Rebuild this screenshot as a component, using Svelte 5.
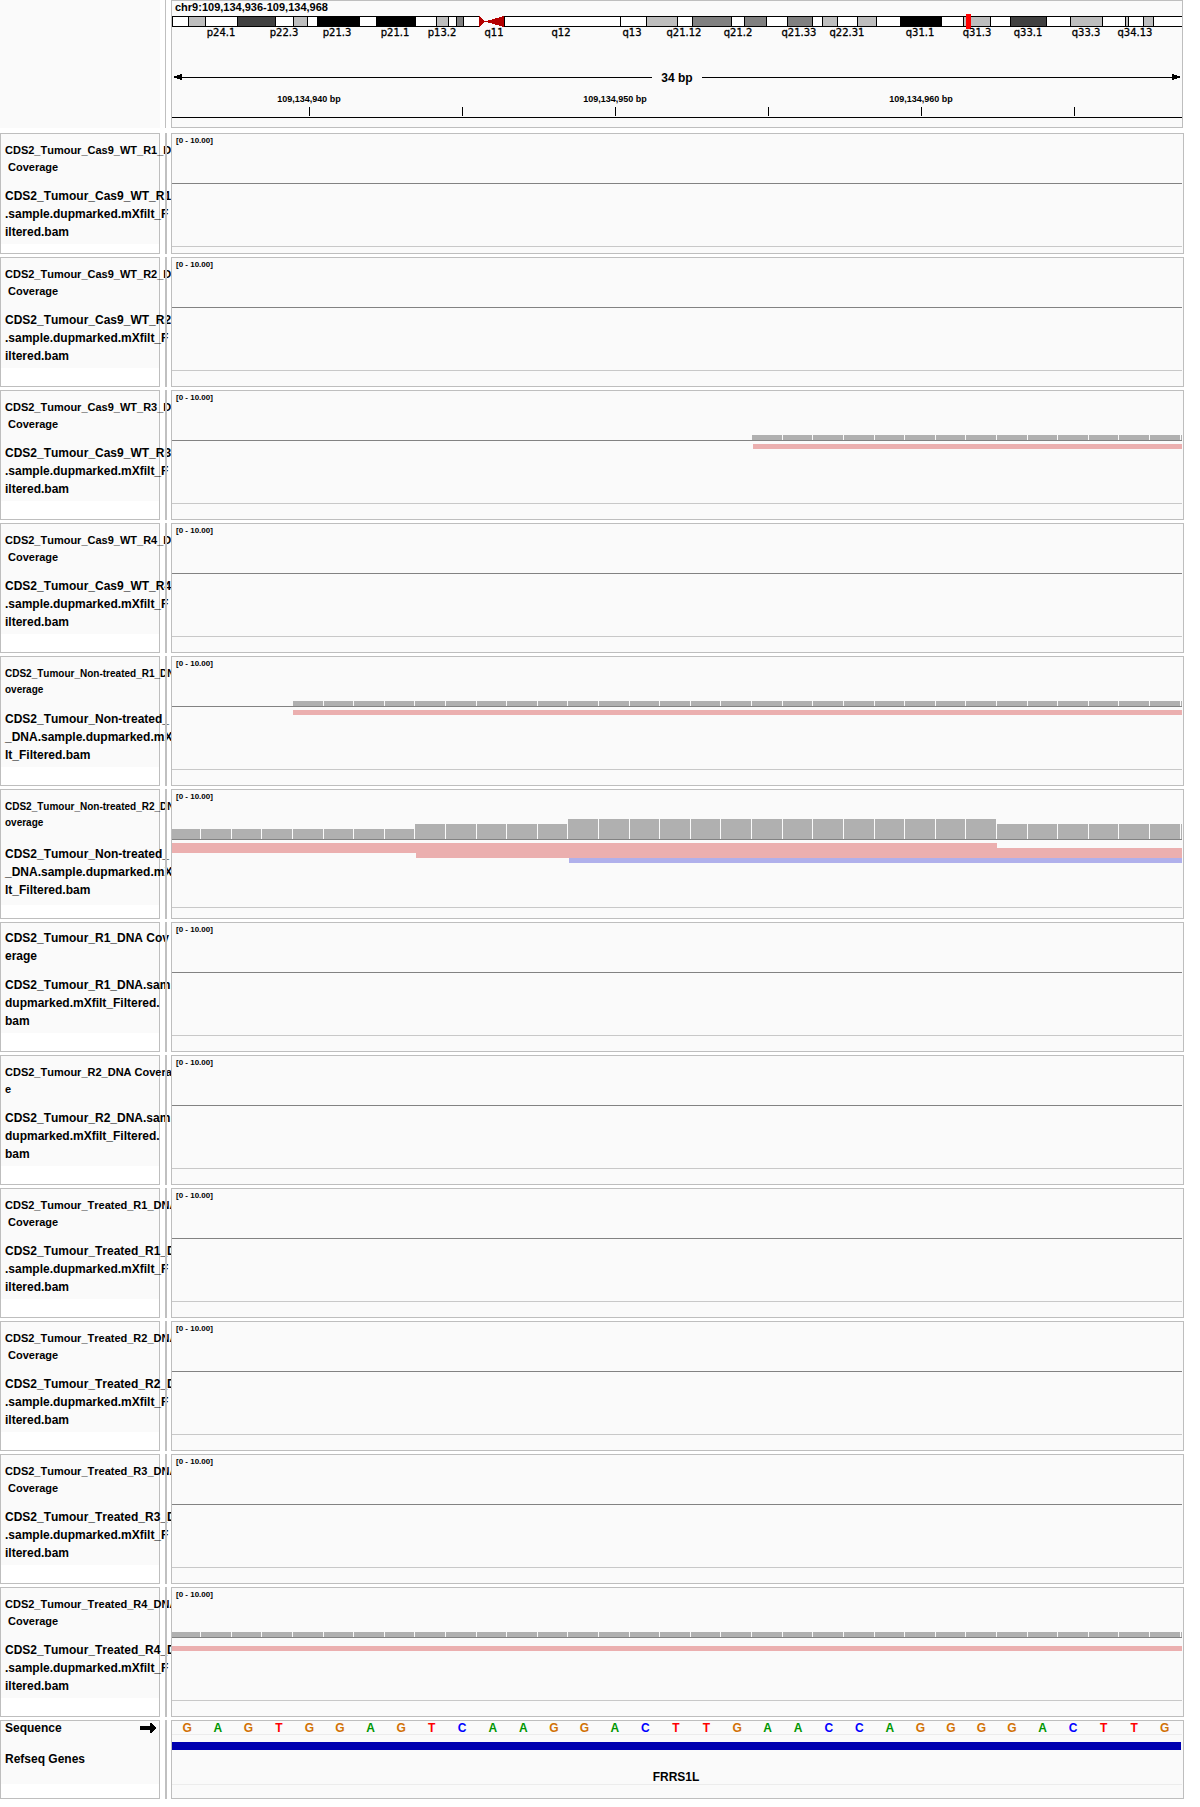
<script>
  // Plot geometry is kept in units of a 1010-wide canvas and drawn as percentages.
  const SPAN = 1010;
  const pct = (v) => `${(v / SPAN) * 100}%`;

  const shades = { w: '#ffffff', l: '#bebebe', m: '#808080', d: '#404040', k: '#000000' };

  const bandEdges = [
    [0, 'w'], [16, 'l'], [33, 'w'], [65, 'd'], [103, 'w'], [121, 'l'], [135, 'w'],
    [145, 'k'], [187, 'w'], [204, 'k'], [243, 'w'], [264, 'l'], [276, 'w'],
    [284, 'm'], [291, 'w'], [307, 'gap'], [332, 'w'], [448, 'w'], [474, 'l'],
    [505, 'w'], [520, 'm'], [559, 'w'], [572, 'm'], [594, 'w'], [615, 'm'],
    [640, 'w'], [650, 'l'], [665, 'w'], [685, 'l'], [704, 'w'], [728, 'k'],
    [769, 'w'], [791, 'l'], [818, 'w'], [838, 'd'], [874, 'w'], [898, 'l'],
    [930, 'w'], [953, 'l'], [956, 'w'], [971, 'l'], [981, 'w']
  ];
  const bands = bandEdges
    .map(([x, tone], i) => ({ x, tone, end: i + 1 < bandEdges.length ? bandEdges[i + 1][0] : SPAN }))
    .filter((b) => b.tone !== 'gap');

  const bandLabels = [
    ['p24.1', 49], ['p22.3', 112], ['p21.3', 165], ['p21.1', 223], ['p13.2', 270],
    ['q11', 322], ['q12', 389], ['q13', 460], ['q21.12', 512], ['q21.2', 566],
    ['q21.33', 627], ['q22.31', 675], ['q31.1', 748], ['q31.3', 805],
    ['q33.1', 856], ['q33.3', 914], ['q34.13', 963]
  ];

  const ticks = [
    { x: 137, label: '109,134,940 bp' }, { x: 290 },
    { x: 443, label: '109,134,950 bp' }, { x: 596 },
    { x: 749, label: '109,134,960 bp' }, { x: 902 }
  ];

  // Right edge of the base in column k; a one-unit gap follows it.
  const edge = (k) => (k > 32 ? SPAN : Math.floor(28.6 + 30.61 * k));
  const coverage = (from, to, height) =>
    Array.from({ length: to - from + 1 }, (_, i) => {
      const k = from + i;
      const x = k === 0 ? 0 : edge(k - 1) + 1;
      return { x, w: edge(k) - x, h: height };
    });

  const fwd = '#ebafaf';
  const rev = '#b0b0eb';

  const wt = (n) => ({
    size: 'mid',
    cov: [`CDS2_Tumour_Cas9_WT_${n}_D`, ' Coverage'],
    name: [`CDS2_Tumour_Cas9_WT_${n}`, '.sample.dupmarked.mXfilt_F', 'iltered.bam']
  });
  const non = (n) => ({
    size: 'small',
    cov: [`CDS2_Tumour_Non-treated_${n}_DN`, 'overage'],
    name: ['CDS2_Tumour_Non-treated_', '_DNA.sample.dupmarked.mX', 'lt_Filtered.bam']
  });
  const plain = (n, size, cov) => ({
    size,
    cov,
    name: [`CDS2_Tumour_${n}_DNA.sam`, 'dupmarked.mXfilt_Filtered.', 'bam']
  });
  const treated = (n) => ({
    size: 'mid',
    cov: [`CDS2_Tumour_Treated_${n}_DNA`, ' Coverage'],
    name: [`CDS2_Tumour_Treated_${n}_D`, '.sample.dupmarked.mXfilt_F', 'iltered.bam']
  });

  const tracks = [
    { ...wt('R1'), short: true },
    wt('R2'),
    { ...wt('R3'), bars: coverage(19, 33, 5), reads: [{ x: 581, end: SPAN, y: 53, h: 5, fill: fwd }] },
    wt('R4'),
    { ...non('R1'), bars: coverage(4, 33, 5), reads: [{ x: 121, end: SPAN, y: 53, h: 5, fill: fwd }] },
    {
      ...non('R2'),
      tall: true,
      bars: [...coverage(0, 7, 10), ...coverage(8, 12, 15), ...coverage(13, 26, 20), ...coverage(27, 33, 15)],
      reads: [
        { x: 0, end: 825, y: 53, h: 5, fill: fwd },
        { x: 0, end: SPAN, y: 58, h: 5, fill: fwd },
        { x: 244, end: SPAN, y: 63, h: 5, fill: fwd },
        { x: 397, end: SPAN, y: 68, h: 5, fill: rev }
      ]
    },
    plain('R1', 'large', ['CDS2_Tumour_R1_DNA Cov', 'erage']),
    plain('R2', 'mid', ['CDS2_Tumour_R2_DNA Covera', 'e']),
    treated('R1'),
    treated('R2'),
    treated('R3'),
    { ...treated('R4'), bars: coverage(0, 33, 5), reads: [{ x: 0, end: SPAN, y: 58, h: 5, fill: fwd }] }
  ];

  const bases = [...'GAGTGGAGTCAAGGACTTGAACCAGGGGACTTG'];
</script>

<main class="viewer">
  <header class="row ruler-row">
    <div class="corner"></div>
    <div class="gutter thin"></div>
    <section class="panel ruler" aria-label="Genome ruler">
      <h1>chr9:109,134,936-109,134,968</h1>
      <svg class="cyto" aria-label="Chromosome 9">
        {#each bands as b}
          <rect x={pct(b.x)} y="2" width={pct(b.end - b.x)} height="11" fill={shades[b.tone]} />
          <rect x={pct(b.x)} y="2" width="1" height="11" />
          <rect x={pct(b.x)} y="2" width={pct(b.end - b.x)} height="1" />
          <rect x={pct(b.x)} y="12" width={pct(b.end - b.x)} height="1" />
        {/each}
        <svg x={pct(307)} y="2" width={pct(25)} height="11" viewBox="0 0 25 11" preserveAspectRatio="none">
          <path d="M0 0L6 5.5L0 11ZM25 0L6 5.5L25 11Z" fill="#b40000" />
        </svg>
        <rect x={pct(794)} y="0" width="5" height="15" fill="#ff0000" />
        {#each bandLabels as [label, x]}
          <text x={pct(x)} y="22">{label}</text>
        {/each}
      </svg>
      <div class="span">
        <svg class="arrow" viewBox="0 0 10 6"><path d="M0 3L10 0V6Z" /></svg>
        <i></i>
        <span>34 bp</span>
        <i></i>
        <svg class="arrow" viewBox="0 0 10 6"><path d="M10 3L0 0V6Z" /></svg>
      </div>
      <svg class="ticks" aria-label="Positions">
        {#each ticks as t}
          {#if t.label}<text x={pct(t.x)} y="12">{t.label}</text>{/if}
          <rect x={pct(t.x)} y="17" width="1" height="9" />
        {/each}
        <rect x="0" y="27" width="100%" height="1" />
      </svg>
    </section>
  </header>

  {#each tracks as t}
    <section class="row track" class:short={t.short} class:tall={t.tall}>
      <div class="names">
        <div class="cov {t.size}">{#each t.cov as line}<p>{line}</p>{/each}</div>
        <div class="align">{#each t.name as line}<p>{line}</p>{/each}</div>
      </div>
      <div class="gutter"></div>
      <div class="panel data">
        <svg aria-label="Coverage and alignments">
          {#each t.bars ?? [] as b}
            <rect x={pct(b.x)} y={49 - b.h} width={pct(b.w)} height={b.h} fill="#b0b0b0" />
          {/each}
          <rect x="0" y="49" width="100%" height="1" fill="#828282" />
          {#each t.reads ?? [] as r}
            <rect x={pct(r.x)} y={r.y} width={pct(r.end - r.x)} height={r.h} fill={r.fill} />
          {/each}
          <rect x="0" y={t.tall ? 117 : 112} width="100%" height="1" fill="#c8c8c8" />
          <text x="4" y="9">[0 - 10.00]</text>
        </svg>
      </div>
    </section>
  {/each}

  <section class="row genes">
    <div class="names">
      <div class="seq-name">
        <span>Sequence</span>
        <svg viewBox="0 0 16 10"><path d="M0 3H10V0H11L16 5L11 10H10V7H0Z" /></svg>
      </div>
      <div class="gene-name">Refseq Genes</div>
    </div>
    <div class="gutter"></div>
    <div class="panel data">
      <div class="bases">
        {#each bases as b}<span class={b}>{b}</span>{/each}
      </div>
      <div class="gene">
        <div class="exon"></div>
        <span>FRRS1L</span>
      </div>
    </div>
  </section>
</main>

<style>
  :global(body) {
    margin: 0;
    background: #fff;
  }
  .viewer {
    display: flex;
    flex-direction: column;
    gap: 3px;
    padding-right: 16px;
    font: bold 12px/18px 'Liberation Sans', Arial, sans-serif;
    font-kerning: none;
    color: #000;
  }
  p, h1 {
    margin: 0;
    white-space: pre;
  }
  svg {
    display: block;
    shape-rendering: crispEdges;
  }
  .row {
    display: flex;
    box-sizing: border-box;
    overflow: hidden;
  }
  .gutter {
    flex: none;
    width: 2px;
    margin: 0 4px 0 5px;
    background: #c0c0c0;
  }
  .gutter.thin {
    width: 1px;
    margin-right: 5px;
  }
  .panel {
    flex: 1;
    min-width: 0;
    box-sizing: border-box;
    border: 1px solid #bebebe;
    background: #fafafa;
  }

  .ruler-row {
    height: 128px;
    margin-bottom: 2px;
  }
  .corner {
    flex: none;
    width: 160px;
    background: #fafafa;
  }
  .ruler {
    margin-right: 1px;
  }
  h1 {
    padding-left: 3px;
    font-size: 11px;
    line-height: 13px;
  }
  .cyto {
    width: 100%;
    height: 26px;
    overflow: hidden;
  }
  .cyto text {
    font: 10px 'DejaVu Sans', sans-serif;
    text-anchor: middle;
    stroke: #000;
    stroke-width: 0.3px;
  }
  .span {
    display: flex;
    align-items: center;
    height: 18px;
    margin-top: 28px;
  }
  .span i {
    flex: 1;
    height: 1px;
    background: #000;
  }
  .span span {
    padding: 2px 9px 0;
  }
  .arrow {
    flex: none;
    width: 10px;
    height: 6px;
  }
  .ticks {
    width: 100%;
    height: 30px;
    margin-top: 4px;
  }
  .ticks text {
    font-size: 9px;
    text-anchor: middle;
  }

  .track {
    height: 130px;
  }
  .track.short {
    height: 121px;
  }
  .names {
    flex: none;
    box-sizing: border-box;
    width: 160px;
    border: 1px solid #bebebe;
  }
  .cov, .align {
    display: flex;
    flex-direction: column;
    justify-content: center;
    box-sizing: border-box;
    padding-left: 4px;
    background: #fafafa;
  }
  .cov {
    height: 49px;
  }
  .align {
    height: 61px;
  }
  .tall .align {
    height: 66px;
  }
  .small {
    font-size: 10px;
    line-height: 16px;
  }
  .mid {
    font-size: 11px;
    line-height: 17px;
  }
  .large {
    padding-bottom: 2px;
  }
  .data {
    padding-right: 1px;
  }
  .data > svg {
    width: 100%;
    height: 119px;
  }
  .data text {
    font-size: 8px;
  }

  .genes {
    height: 79px;
  }
  .seq-name, .gene-name {
    box-sizing: border-box;
    padding-left: 4px;
    background: #fafafa;
  }
  .seq-name {
    display: flex;
    justify-content: space-between;
    align-items: center;
    height: 14px;
    padding-right: 3px;
  }
  .seq-name svg {
    width: 16px;
    height: 10px;
  }
  .gene-name {
    height: 49px;
    padding-top: 15px;
  }
  .bases {
    display: grid;
    grid-template-columns: repeat(33, 1fr);
    height: 13px;
    padding-right: 2px;
    border-bottom: 1px solid #ececec;
    line-height: 14px;
    text-align: center;
  }
  .G { color: #d17105; }
  .A { color: #009600; }
  .T { color: #ff0000; }
  .C { color: #0000ff; }
  .gene {
    display: flow-root;
    height: 49px;
    border-bottom: 1px solid #ececec;
    text-align: center;
  }
  .gene span {
    display: block;
    margin: 18px 2px 0 0;
  }
  .exon {
    height: 8px;
    margin: 7px 1px 0 0;
    background: #0000b0;
  }
</style>
